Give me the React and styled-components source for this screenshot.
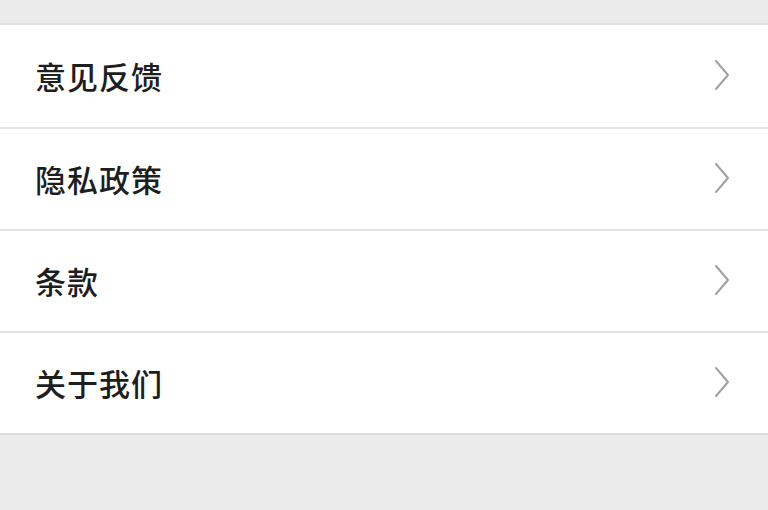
import React from 'react'
import styled, { createGlobalStyle } from 'styled-components'

const GlobalStyle = createGlobalStyle`
  html, body {
    margin: 0;
    padding: 0;
    background: #ebebeb;
  }
  body {
    font-family: "Noto Sans CJK SC", "Noto Sans", sans-serif;
  }
`

const Page = styled.div`
  width: 768px;
  height: 510px;
  background: #ebebeb;
  padding-top: 23px;
  box-sizing: border-box;
  overflow: hidden;
`

const List = styled.ul`
  list-style: none;
  margin: 0;
  padding: 0;
  background: #fff;
  border-top: 2px solid #e0e0e0;
  border-bottom: 2px solid #dcdcdc;
`

const Row = styled.li`
  display: flex;
  align-items: center;
  justify-content: space-between;
  height: 102px;
  padding: 0 38px 2px 35px;
  box-sizing: border-box;
  border-top: ${(p) => (p.$first ? 'none' : '2px solid #e2e2e2')};
  cursor: pointer;
`

const Label = styled.span`
  font-size: 31px;
  font-weight: 500;
  color: #1e1e1e;
  letter-spacing: 1px;
`

const Chevron = () => (
  <svg width="16" height="32" viewBox="0 0 16 32" fill="none">
    <path d="M2 2 L14 16 L2 30" stroke="#a0a0a0" strokeWidth="2" strokeLinecap="round" strokeLinejoin="round" />
  </svg>
)

const items = ['意见反馈', '隐私政策', '条款', '关于我们']

const App = () => (
  <>
    <GlobalStyle />
    <Page>
      <List>
        {items.map((text, i) => (
          <Row key={text} $first={i === 0}>
            <Label>{text}</Label>
            <Chevron />
          </Row>
        ))}
      </List>
    </Page>
  </>
)

export default App
